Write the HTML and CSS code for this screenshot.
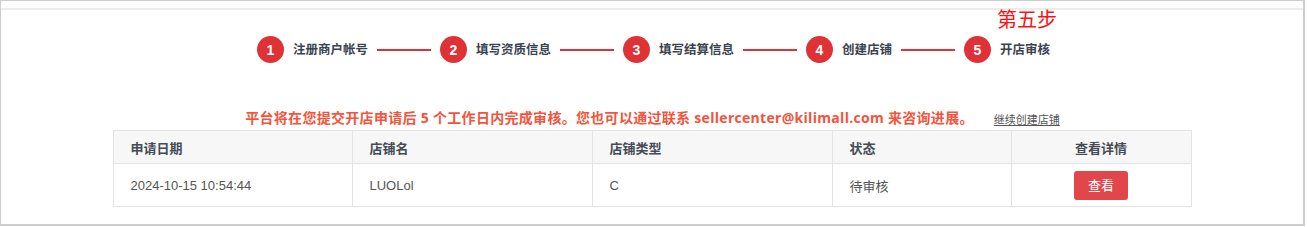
FILE: index.html
```html
<html>
  <head>
    <meta charset="utf-8" />
    <link rel="stylesheet" href="styles.css">
  </head>
  <body>
    <div class="shop-panel">
      <div class="panel-top"></div>

      <div class="steps">
        <div class="step">
          <span class="step-num">1</span>
          <span class="step-label">注册商户帐号</span>
        </div>
        <span class="step-line"></span>
        <div class="step">
          <span class="step-num">2</span>
          <span class="step-label">填写资质信息</span>
        </div>
        <span class="step-line"></span>
        <div class="step">
          <span class="step-num">3</span>
          <span class="step-label">填写结算信息</span>
        </div>
        <span class="step-line"></span>
        <div class="step">
          <span class="step-num">4</span>
          <span class="step-label">创建店铺</span>
        </div>
        <span class="step-line"></span>
        <div class="step">
          <span class="step-num">5</span>
          <span class="step-label">开店审核<span class="step-note">第五步</span></span>
        </div>
      </div>

      <div class="notice">
        <span class="notice-text">平台将在您提交开店申请后 5 个工作日内完成审核。您也可以通过联系 sellercenter@kilimall.com 来咨询进展。</span>
        <a class="notice-link" href="#">继续创建店铺</a>
      </div>

      <table class="apply-table">
        <colgroup>
          <col style="width: 239px" />
          <col style="width: 240px" />
          <col style="width: 240px" />
          <col style="width: 179px" />
          <col />
        </colgroup>
        <thead>
          <tr>
            <th>申请日期</th>
            <th>店铺名</th>
            <th>店铺类型</th>
            <th>状态</th>
            <th class="center">查看详情</th>
          </tr>
        </thead>
        <tbody>
          <tr>
            <td>2024-10-15 10:54:44</td>
            <td>LUOLol</td>
            <td>C</td>
            <td>待审核</td>
            <td class="center"><a class="btn-view" href="#">查看</a></td>
          </tr>
        </tbody>
      </table>
    </div>
  </body>
</html>
```

FILE: styles.css
```css
body {
  margin: 0;
  background: #fff;
  font-family: "Liberation Sans", "Noto Sans CJK SC", sans-serif;
}

.shop-panel {
  width: 1305px;
  height: 226px;
  box-sizing: border-box;
  border: 1px solid #cdcdcd;
  border-right-width: 2px;
  border-bottom-width: 2px;
}

.panel-top {
  height: 7px;
  border-bottom: 2px solid #ececec;
}

.steps {
  display: flex;
  align-items: center;
  justify-content: center;
  padding-top: 26px;
  padding-left: 3px;
}

.step {
  display: flex;
  align-items: center;
  gap: 9px;
}

.step-num {
  width: 27px;
  height: 27px;
  border-radius: 50%;
  background: #de3236;
  color: #fff;
  font-size: 14px;
  font-weight: bold;
  display: flex;
  align-items: center;
  justify-content: center;
}

.step-label {
  position: relative;
  font-size: 12.5px;
  font-weight: bold;
  color: #3c4350;
  line-height: 20px;
}

.step-note {
  position: absolute;
  left: -3px;
  top: -32px;
  font-size: 20px;
  line-height: 24px;
  font-weight: normal;
  color: #ff1010;
  white-space: nowrap;
}

.step-line {
  width: 54px;
  height: 2px;
  background: #de3236;
  margin: 0 9px;
}

.notice {
  display: flex;
  align-items: center;
  justify-content: center;
  margin-top: 44px;
  height: 20px;
  margin-bottom: 3px;
  padding-left: 1px;
}

.notice-text {
  font-family: "Open Sans", "Noto Sans CJK SC", sans-serif;
  font-size: 14px;
  font-weight: bold;
  letter-spacing: 0.3px;
  color: #f4533c;
}

.notice-link {
  margin-left: 20px;
  margin-top: 3px;
  font-size: 11px;
  color: #555;
  text-decoration: underline;
}

.apply-table {
  width: 1079px;
  margin: 0 auto;
  border-collapse: collapse;
  table-layout: fixed;
  font-size: 13px;
}

.apply-table th,
.apply-table td {
  border: 1px solid #e3e3e3;
  text-align: left;
  padding: 0 0 0 17px;
}

.apply-table th {
  height: 33px;
  background: #f7f7f7;
  color: #444b55;
  font-weight: bold;
}

.apply-table td {
  height: 43px;
  color: #555;
}

.apply-table .center {
  text-align: center;
  padding: 0;
}

.btn-view {
  display: inline-block;
  width: 54px;
  height: 29px;
  line-height: 29px;
  border-radius: 3px;
  background: #e0464a;
  color: #fff;
  text-decoration: none;
  font-size: 13px;
  vertical-align: middle;
}
```
